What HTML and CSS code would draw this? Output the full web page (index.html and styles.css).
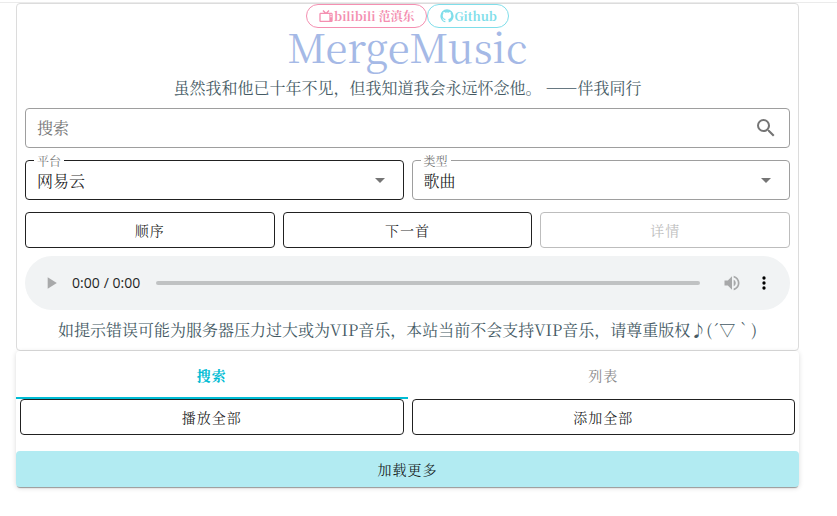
FILE: index.html
```html
<!DOCTYPE html>
<html lang="zh-CN">
<head>
    <meta charset="UTF-8">
    <meta name="viewport" content="width=device-width, initial-scale=1">
    <title>MergeMusic</title>
    <link rel="stylesheet" href="styles.css">
</head>
<body>
    <div class="top-line"></div>
    <main class="container">
        <section class="card">
            <div class="chips">
                <a class="chip chip-pink" href="#">
                    <svg class="chip-icon" viewBox="0 0 24 24"><path d="M8.16,3L6.75,4.41L9.34,7H4C2.89,7 2,7.89 2,9V19C2,20.11 2.89,21 4,21H20C21.11,21 22,20.11 22,19V9C22,7.89 21.11,7 20,7H14.66L17.25,4.41L15.84,3L12,6.84L8.16,3M4,9H17V19H4V9M19.5,9A1,1 0 0,1 20.5,10A1,1 0 0,1 19.5,11A1,1 0 0,1 18.5,10A1,1 0 0,1 19.5,9M19.5,12A1,1 0 0,1 20.5,13A1,1 0 0,1 19.5,14A1,1 0 0,1 18.5,13A1,1 0 0,1 19.5,12Z"/></svg>
                    <span>bilibili 范滇东</span>
                </a>
                <a class="chip chip-cyan" href="#">
                    <svg class="chip-icon" viewBox="0 0 24 24"><path d="M12,2A10,10 0 0,0 2,12C2,16.42 4.87,20.17 8.84,21.5C9.34,21.58 9.5,21.27 9.5,21C9.5,20.77 9.5,20.14 9.5,19.31C6.73,19.91 6.14,17.97 6.14,17.97C5.68,16.81 5.03,16.5 5.03,16.5C4.12,15.88 5.1,15.9 5.1,15.9C6.1,15.97 6.63,16.93 6.63,16.93C7.5,18.45 8.97,18 9.54,17.76C9.63,17.11 9.89,16.67 10.17,16.42C7.95,16.17 5.62,15.31 5.62,11.5C5.62,10.39 6,9.5 6.65,8.79C6.55,8.54 6.2,7.5 6.75,6.15C6.75,6.15 7.59,5.88 9.5,7.17C10.29,6.95 11.15,6.84 12,6.84C12.85,6.84 13.71,6.95 14.5,7.17C16.41,5.88 17.25,6.15 17.25,6.15C17.8,7.5 17.45,8.54 17.35,8.79C18,9.5 18.38,10.39 18.38,11.5C18.38,15.32 16.04,16.16 13.81,16.41C14.17,16.72 14.5,17.33 14.5,18.26C14.5,19.6 14.5,20.68 14.5,21C14.5,21.27 14.66,21.59 15.17,21.5C19.14,20.16 22,16.42 22,12A10,10 0 0,0 12,2Z"/></svg>
                    <span>Github</span>
                </a>
            </div>
            <h1 class="title">MergeMusic</h1>
            <p class="text">虽然我和他已十年不见，但我知道我会永远怀念他。 ——伴我同行</p>

            <form class="search">
                <input class="search-input" type="text" id="keyword" placeholder="搜索" aria-label="搜索">
                <button class="search-btn" type="button" aria-label="搜索">
                    <svg class="icon" viewBox="0 0 24 24"><path d="M9.5,3A6.5,6.5 0 0,1 16,9.5C16,11.11 15.41,12.59 14.44,13.73L14.71,14H15.5L20.5,19L19,20.5L14,15.5V14.71L13.73,14.44C12.59,15.41 11.11,16 9.5,16A6.5,6.5 0 0,1 3,9.5A6.5,6.5 0 0,1 9.5,3M9.5,5C7,5 5,7 5,9.5C5,12 7,14 9.5,14C12,14 14,12 14,9.5C14,7 12,5 9.5,5Z"/></svg>
                </button>
            </form>

            <div class="selects">
                <div class="field field-active">
                    <label for="platform">平台</label>
                    <select id="platform">
                        <option>网易云</option>
                    </select>
                    <svg class="icon arrow" viewBox="0 0 24 24"><path d="M7,10L12,15L17,10H7Z"/></svg>
                </div>
                <div class="field">
                    <label for="type">类型</label>
                    <select id="type">
                        <option>歌曲</option>
                    </select>
                    <svg class="icon arrow" viewBox="0 0 24 24"><path d="M7,10L12,15L17,10H7Z"/></svg>
                </div>
            </div>

            <div class="controls">
                <button class="btn" type="button">顺序</button>
                <button class="btn" type="button">下一首</button>
                <button class="btn" type="button" disabled>详情</button>
            </div>

            <audio class="player" controls></audio>
            <p class="text">如提示错误可能为服务器压力过大或为VIP音乐，本站当前不会支持VIP音乐，请尊重版权♪(´▽｀)</p>
        </section>

        <section class="panel">
            <div class="tabs" role="tablist">
                <button class="tab active" type="button" role="tab" aria-selected="true">搜索</button>
                <button class="tab" type="button" role="tab" aria-selected="false">列表</button>
            </div>
            <div class="actions">
                <button class="btn" type="button">播放全部</button>
                <button class="btn" type="button">添加全部</button>
            </div>
            <button class="btn btn-more" type="button">加载更多</button>
        </section>
    </main>
</body>
</html>
```
FILE: styles.css
```css
* {
    box-sizing: border-box;
}

body {
    margin: 0;
    background-color: #fff;
    color: rgba(0, 0, 0, 0.87);
    font-family: "Noto Serif CJK SC", "Noto Serif SC", "Source Han Serif SC", "Liberation Serif", "Noto Sans CJK SC", serif;
    font-size: 16px;
    line-height: 24px;
}

button, input, select {
    font-family: inherit;
}

.top-line {
    height: 3px;
    border-bottom: 1px solid #ebebeb;
}

.container {
    padding: 0 38px 16px 16px;
}

.card {
    padding: 0 8px 8px;
    border: 1px solid #dcdcdc;
    border-radius: 4px;
}

.chips {
    display: flex;
    justify-content: center;
}

.chip {
    display: flex;
    align-items: center;
    height: 24px;
    padding: 0 11px;
    border: 1px solid;
    border-radius: 12px;
    font-size: 12px;
    font-weight: bold;
    line-height: 16px;
    text-decoration: none;
}

.chip-pink {
    color: #f48fb1;
}

.chip-cyan {
    color: #80deea;
}

.chip-icon {
    width: 16px;
    height: 16px;
    fill: currentColor;
}

.title {
    margin: 0 0 12px;
    color: #a5b9e6;
    font-size: 40px;
    font-weight: normal;
    line-height: 36px;
    text-align: center;
}

.text {
    margin: 0;
    color: #455a64;
    text-align: center;
}

.search {
    display: flex;
    align-items: center;
    height: 40px;
    margin-top: 8px;
    padding: 0 11px;
    border: 1px solid #9e9e9e;
    border-radius: 4px;
}

.search-input {
    flex: 1;
    min-width: 0;
    padding: 0 0 2px;
    border: none;
    outline: none;
    background: none;
    font-size: 16px;
}

.search-input::placeholder {
    color: #757575;
}

.search-btn {
    display: flex;
    padding: 0;
    border: none;
    background: none;
    cursor: pointer;
}

.icon {
    width: 24px;
    height: 24px;
    fill: #757575;
}

.selects {
    display: grid;
    grid-template-columns: 1fr 1fr;
    gap: 8px;
    margin-top: 12px;
}

.field {
    position: relative;
}

/* label sits on the outline of the select */
.field label {
    position: absolute;
    top: -7px;
    left: 9px;
    padding: 0 3px;
    background-color: #fff;
    color: #757575;
    font-size: 12px;
    line-height: 16px;
}

.field select {
    display: block;
    width: 100%;
    height: 40px;
    padding: 0 36px 0 11px;
    border: 1px solid #9e9e9e;
    border-radius: 4px;
    appearance: none;
    background: none;
    color: rgba(0, 0, 0, 0.87);
    font-size: 16px;
}

.field-active select {
    border-color: #212121;
}

.arrow {
    position: absolute;
    top: 8px;
    right: 12px;
    pointer-events: none;
}

.controls {
    display: grid;
    grid-template-columns: 1fr 1fr 1fr;
    gap: 8px;
    margin: 12px 0 8px;
}

.btn {
    height: 36px;
    padding: 0 16px;
    border: 1px solid #212121;
    border-radius: 4px;
    background: none;
    color: rgba(0, 0, 0, 0.87);
    font-size: 14px;
    letter-spacing: 1px;
    cursor: pointer;
}

.btn:disabled {
    border-color: #bdbdbd;
    color: #bdbdbd;
    cursor: default;
}

.player {
    display: block;
    width: 100%;
    height: 54px;
    margin-bottom: 8px;
}

.player::-webkit-media-controls-current-time-display,
.player::-webkit-media-controls-time-remaining-display {
    font-family: "Open Sans", sans-serif;
}

.panel {
    border-radius: 4px;
    box-shadow: 0 1px 5px rgba(0, 0, 0, 0.15);
}

.tabs {
    display: grid;
    grid-template-columns: 1fr 1fr;
}

.tab {
    height: 48px;
    padding: 2px 0 0;
    border: none;
    border-bottom: 2px solid transparent;
    background: none;
    color: #8a8a8a;
    font-size: 14px;
    letter-spacing: 1px;
    cursor: pointer;
}

.tab.active {
    border-color: #00bcd4;
    color: #00bcd4;
    font-weight: bold;
}

.actions {
    display: grid;
    grid-template-columns: 1fr 1fr;
    gap: 8px;
    padding: 0 4px 16px;
}

.btn-more {
    display: block;
    width: 100%;
    border: none;
    background-color: #b2ebf2;
    box-shadow: 0 2px 1px -1px rgba(0, 0, 0, 0.35);
}
```
